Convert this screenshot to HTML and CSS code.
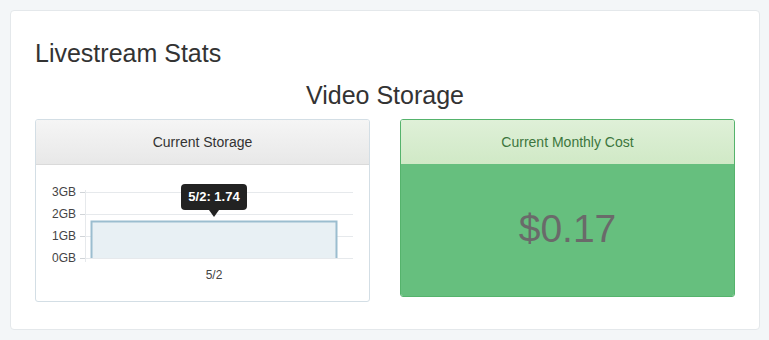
FILE: index.html
```html
<!DOCTYPE html>
<html lang="en">
<head>
  <meta charset="UTF-8">
  <meta name="viewport" content="width=device-width, initial-scale=1.0">
  <title>Livestream Stats</title>
  <link rel="stylesheet" href="styles.css">
</head>
<body>

  <div class="card">
    <h3 class="title">Livestream Stats</h3>
    <h3 class="subtitle">Video Storage</h3>

    <div class="panels">
      <div class="panel panel-default">
        <div class="panel-heading">Current Storage</div>
        <div class="panel-body chart">
          <svg width="333" height="136" viewBox="0 0 333 136">
            <!-- grid -->
            <g stroke="#e6e9ec" stroke-width="1">
              <line x1="49" y1="27.5" x2="317" y2="27.5"/>
              <line x1="49" y1="49.5" x2="317" y2="49.5"/>
              <line x1="49" y1="71.5" x2="317" y2="71.5"/>
              <line x1="49" y1="93.5" x2="317" y2="93.5"/>
              <line x1="49.5" y1="25" x2="49.5" y2="97"/>
            </g>
            <g stroke="#d0d4d8" stroke-width="1">
              <line x1="44" y1="27.5" x2="49" y2="27.5"/>
              <line x1="44" y1="49.5" x2="49" y2="49.5"/>
              <line x1="44" y1="71.5" x2="49" y2="71.5"/>
              <line x1="44" y1="93.5" x2="49" y2="93.5"/>
            </g>
            <!-- bar -->
            <path d="M55.5 93 V56.5 H300.5 V93" fill="#e8f0f4" stroke="#9bbdcf" stroke-width="2"/>
            <!-- labels -->
            <g class="axis" text-anchor="end">
              <text x="40" y="31">3GB</text>
              <text x="40" y="53">2GB</text>
              <text x="40" y="75">1GB</text>
              <text x="40" y="97">0GB</text>
            </g>
            <text class="axis" x="178" y="114" text-anchor="middle">5/2</text>
          </svg>
          <div class="tip">5/2: 1.74</div>
        </div>
      </div>

      <div class="panel panel-success">
        <div class="panel-heading">Current Monthly Cost</div>
        <div class="panel-body cost">$0.17</div>
      </div>
    </div>
  </div>

</body>
</html>
```

FILE: styles.css
```css
body { margin: 0; padding: 10px 9px 10px 10px; background: #f3f6f8; font-family: "Liberation Sans", Arial, sans-serif; color: #333; }
.card { background: #fff; border: 1px solid #e4e8eb; border-radius: 4px; padding: 28px 24px 28px; height: 320px; box-sizing: border-box; }
.title { margin: 0; font-size: 25px; line-height: 28px; font-weight: normal; }
.subtitle { margin: 14px 0 10px; font-size: 25px; line-height: 28px; font-weight: normal; text-align: center; }

.panels { display: grid; grid-template-columns: 1fr 1fr; gap: 30px; align-items: start; }
.panel { border: 1px solid #d3dee5; border-radius: 3px; background: #fff; overflow: hidden; }
.panel-heading { height: 44px; line-height: 44px; text-align: center; font-size: 14px; border-bottom: 1px solid #dadada; background: linear-gradient(#f5f5f5, #e8e8e8); color: #333; }
.panel-body { position: relative; }

.chart { height: 136px; }
.chart svg { display: block; }
.axis { font-size: 12px; fill: #444; font-family: "Liberation Sans", Arial, sans-serif; }
.tip { position: absolute; left: 145px; top: 19px; width: 66px; height: 26px; line-height: 26px; text-align: center; background: #222; color: #fff; font-size: 13px; font-weight: bold; border-radius: 4px; }
.tip::after { content: ""; position: absolute; left: 28px; bottom: -7px; border: 5px solid transparent; border-top: 7px solid #222; border-bottom: 0; }

.panel-success { border-color: #55b36c; }
.panel-success .panel-heading { background: linear-gradient(#dff0d8, #d0e9c6); color: #3c763d; border-bottom: 0; }
.cost { height: 132px; background: #66bf7e; color: #6a6a6a; font-size: 39px; display: flex; align-items: center; justify-content: center; padding-bottom: 2px; box-sizing: border-box; }
```
